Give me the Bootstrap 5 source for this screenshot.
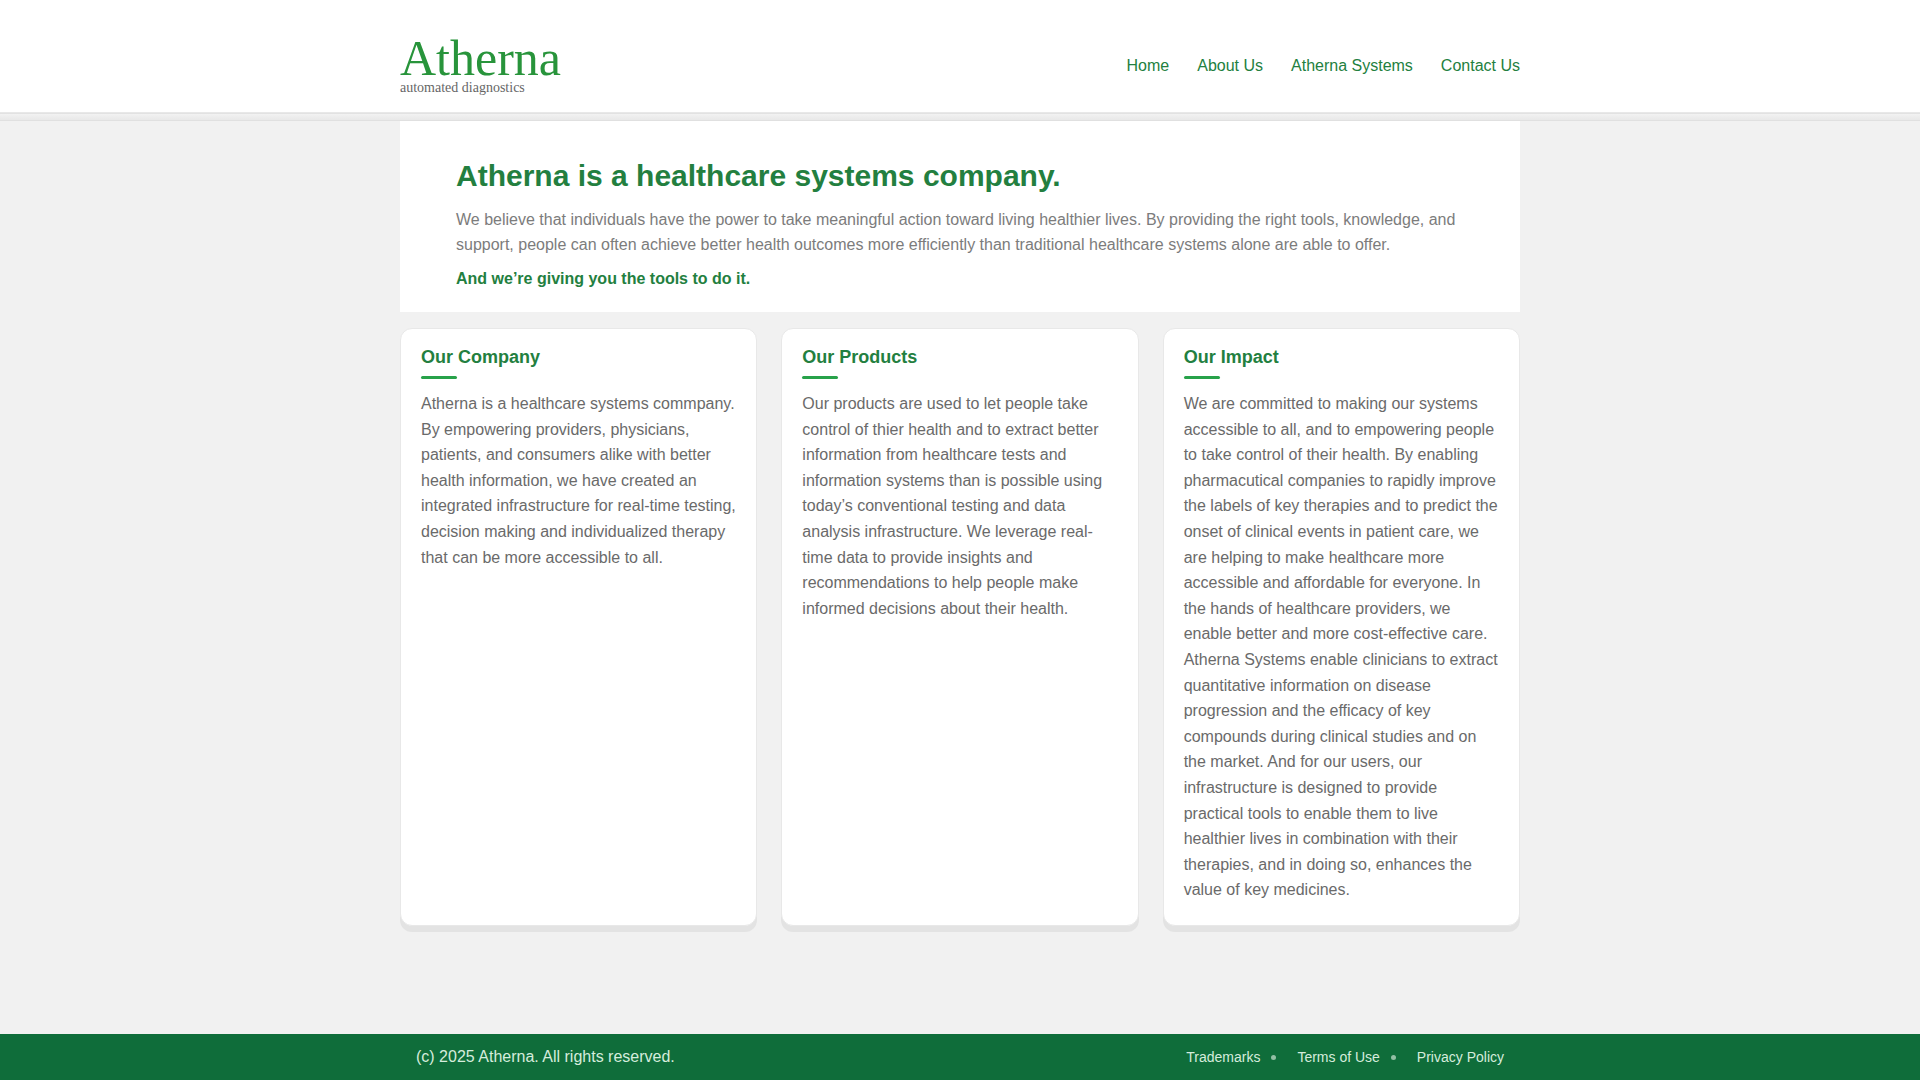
<!DOCTYPE html>
<html lang="en">
<head>
<meta charset="utf-8">
<meta name="viewport" content="width=device-width, initial-scale=1">
<title>Atherna</title>
<link href="https://cdn.jsdelivr.net/npm/bootstrap@5.3.0/dist/css/bootstrap.min.css" rel="stylesheet">
<style>
  body { font-family: "Liberation Sans", Arial, sans-serif; font-size: 16px; line-height: 1.6; background: #f1f1f1; color: #666; }
  .site-width { max-width: 1120px; }
  .site-header { padding: 34px 0 18px; border-bottom: 1px solid #e8e8e8; }
  .brand { font-family: "Liberation Serif", "Times New Roman", serif; color: #666; }
  .brand-name { font-size: 50px; line-height: 48px; color: #28943b; }
  .brand-tag { font-size: 14px; line-height: 12px; }
  .site-nav { column-gap: 28px; padding-top: 3px; }
  .site-nav .nav-link { padding: 0; color: #237f40; }
  .stripe { height: 8px; background: linear-gradient(#f2f2f2, #e8e8e8); border-top: 1px solid #e2e2e2; border-bottom: 1px solid #e0e0e0; }
  .hero { padding: 37px 56px 21px; line-height: 25px; color: #7c7c7c; }
  .hero h1 { font-size: 30px; line-height: 36px; margin-bottom: 13px; }
  .hero p { margin-bottom: 9px; }
  .green { color: #237f40; }
  .panel { border: 1px solid #e8e8e8; border-radius: 12px; box-shadow: 0 6px 0 #e3e3e3; padding: 18px 20px 22px; color: #6a6a6a; }
  .panel h2 { font-size: 18px; line-height: 20px; margin-bottom: 12px; }
  .panel h2::after { content: ""; display: block; width: 36px; height: 3px; margin-top: 9px; border-radius: 2px; background: #28a24a; }
  .site-footer { background: #0f6d3a; color: #d5ecdc; }
  .site-footer .inner { padding: 10px 16px; }
  .legal { font-size: 14px; column-gap: 21px; }
  .legal a { color: #d5ecdc; }
  .legal li { display: flex; align-items: center; column-gap: 11px; }
  .legal li:not(:last-child)::after { content: ""; width: 5px; height: 5px; border-radius: 50%; background: #93bfa4; }
</style>
</head>
<body class="d-flex flex-column min-vh-100">
<header class="site-header bg-white">
  <div class="container-fluid site-width px-3 px-xl-0 d-flex flex-wrap justify-content-between align-items-center">
    <a href="#" class="brand text-decoration-none">
      <div class="brand-name">Atherna</div>
      <div class="brand-tag">automated diagnostics</div>
    </a>
    <nav class="site-nav nav">
      <a class="nav-link" href="#">Home</a>
      <a class="nav-link" href="#">About Us</a>
      <a class="nav-link" href="#">Atherna Systems</a>
      <a class="nav-link" href="#">Contact Us</a>
    </nav>
  </div>
</header>
<div class="stripe"></div>
<main class="container-fluid site-width px-0 flex-grow-1 mb-5">
  <section class="hero bg-white mb-3">
    <h1 class="green fw-bold">Atherna is a healthcare systems company.</h1>
    <p>We believe that individuals have the power to take meaningful action toward living healthier lives. By providing the right tools, knowledge, and support, people can often achieve better health outcomes more efficiently than traditional healthcare systems alone are able to offer.</p>
    <p class="green fw-bold mb-0">And we’re giving you the tools to do it.</p>
  </section>
  <div class="row g-4">
    <div class="col-12 col-md-4">
      <section class="panel bg-white h-100">
        <h2 class="green fw-bold">Our Company</h2>
        <p class="mb-0">Atherna is a healthcare systems commpany. By empowering providers, physicians, patients, and consumers alike with better health information, we have created an integrated infrastructure for real-time testing, decision making and individualized therapy that can be more accessible to all.</p>
      </section>
    </div>
    <div class="col-12 col-md-4">
      <section class="panel bg-white h-100">
        <h2 class="green fw-bold">Our Products</h2>
        <p class="mb-0">Our products are used to let people take control of thier health and to extract better information from healthcare tests and information systems than is possible using today’s conventional testing and data analysis infrastructure. We leverage real-time data to provide insights and recommendations to help people make informed decisions about their health.</p>
      </section>
    </div>
    <div class="col-12 col-md-4">
      <section class="panel bg-white h-100">
        <h2 class="green fw-bold">Our Impact</h2>
        <p class="mb-0">We are committed to making our systems accessible to all, and to empowering people to take control of their health. By enabling pharmacutical companies to rapidly improve the labels of key therapies and to predict the onset of clinical events in patient care, we are helping to make healthcare more accessible and affordable for everyone. In the hands of healthcare providers, we enable better and more cost-effective care. Atherna Systems enable clinicians to extract quantitative information on disease progression and the efficacy of key compounds during clinical studies and on the market. And for our users, our infrastructure is designed to provide practical tools to enable them to live healthier lives in combination with their therapies, and in doing so, enhances the value of key medicines.</p>
      </section>
    </div>
  </div>
</main>
<footer class="site-footer">
  <div class="container-fluid site-width inner d-flex flex-wrap justify-content-between align-items-center">
    <div>(c) 2025 Atherna. All rights reserved.</div>
    <ul class="legal list-unstyled d-flex flex-wrap mb-0">
      <li><a href="#" class="text-decoration-none">Trademarks</a></li>
      <li><a href="#" class="text-decoration-none">Terms of Use</a></li>
      <li><a href="#" class="text-decoration-none">Privacy Policy</a></li>
    </ul>
  </div>
</footer>
<script src="https://cdn.jsdelivr.net/npm/bootstrap@5.3.0/dist/js/bootstrap.bundle.min.js"></script>
</body>
</html>
